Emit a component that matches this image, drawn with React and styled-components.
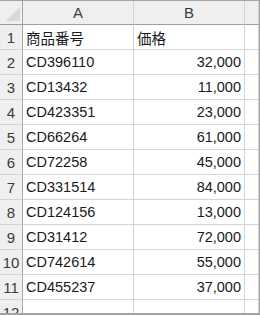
import React from 'react';
import styled, { createGlobalStyle } from 'styled-components';

const GlobalStyle = createGlobalStyle`
    html, body {
        margin: 0;
        padding: 0;
        background: #ffffff;
    }
`

const Sheet = styled.div`
    width: 260px;
    height: 315px;
    box-sizing: border-box;
    overflow: hidden;
    border-top: 1px solid #a3a3a3;
    border-right: 1px solid #a3a3a3;
    border-bottom: 2px solid #a3a3a3;
    font-family: "Liberation Sans", "Noto Sans CJK JP", sans-serif;
`
const Grid = styled.div`
    display: grid;
    grid-template-columns: 23px 111px 111px 1fr;
    grid-template-rows: 24px;
    grid-auto-rows: 25px;
`
const Corner = styled.div`
    position: relative;
    background: #efefef;
    border-right: 1px solid #a8a8a8;
    border-bottom: 1px solid #9e9e9e;
    box-sizing: border-box;
`
const Triangle = styled.svg`
    position: absolute;
    right: 2px;
    bottom: 3px;
`
const ColHead = styled.div`
    display: flex;
    align-items: center;
    justify-content: center;
    background: #efefef;
    border-right: 1px solid #d4d4d4;
    border-bottom: 1px solid #9e9e9e;
    box-sizing: border-box;
    color: #3c3c3c;
    font-size: 15px;
`
const RowHead = styled.div`
    display: flex;
    align-items: center;
    justify-content: center;
    background: #efefef;
    border-right: 1px solid #a8a8a8;
    border-bottom: 1px solid #d4d4d4;
    box-sizing: border-box;
    color: #3c3c3c;
    font-size: 15px;
`
const Cell = styled.div`
    display: flex;
    align-items: center;
    justify-content: ${({ numeric }) => numeric ? 'flex-end' : 'flex-start'};
    padding: 0 3px;
    border-right: 1px solid #d4d4d4;
    border-bottom: 1px solid #d4d4d4;
    box-sizing: border-box;
    color: #1a1a1a;
    font-size: 14.5px;
    white-space: nowrap;
`

const rows = [
    ['商品番号', '価格'],
    ['CD396110', '32,000'],
    ['CD13432', '11,000'],
    ['CD423351', '23,000'],
    ['CD66264', '61,000'],
    ['CD72258', '45,000'],
    ['CD331514', '84,000'],
    ['CD124156', '13,000'],
    ['CD31412', '72,000'],
    ['CD742614', '55,000'],
    ['CD455237', '37,000'],
    ['', ''],
]

const App = () => {
    return (
        <>
        <GlobalStyle />
        <Sheet>
            <Grid>
                <Corner>
                    <Triangle width="14" height="14" viewBox="0 0 14 14">
                        <polygon points="0,14 14,0 14,14" fill="#d9d9d9" />
                    </Triangle>
                </Corner>
                <ColHead>A</ColHead>
                <ColHead>B</ColHead>
                <ColHead />
                {rows.map((row, i) => (
                    <React.Fragment key={i}>
                        <RowHead>{i + 1}</RowHead>
                        <Cell>{row[0]}</Cell>
                        <Cell numeric={i > 0}>{row[1]}</Cell>
                        <Cell />
                    </React.Fragment>
                ))}
            </Grid>
        </Sheet>
        </>
    );
}

export default App;
